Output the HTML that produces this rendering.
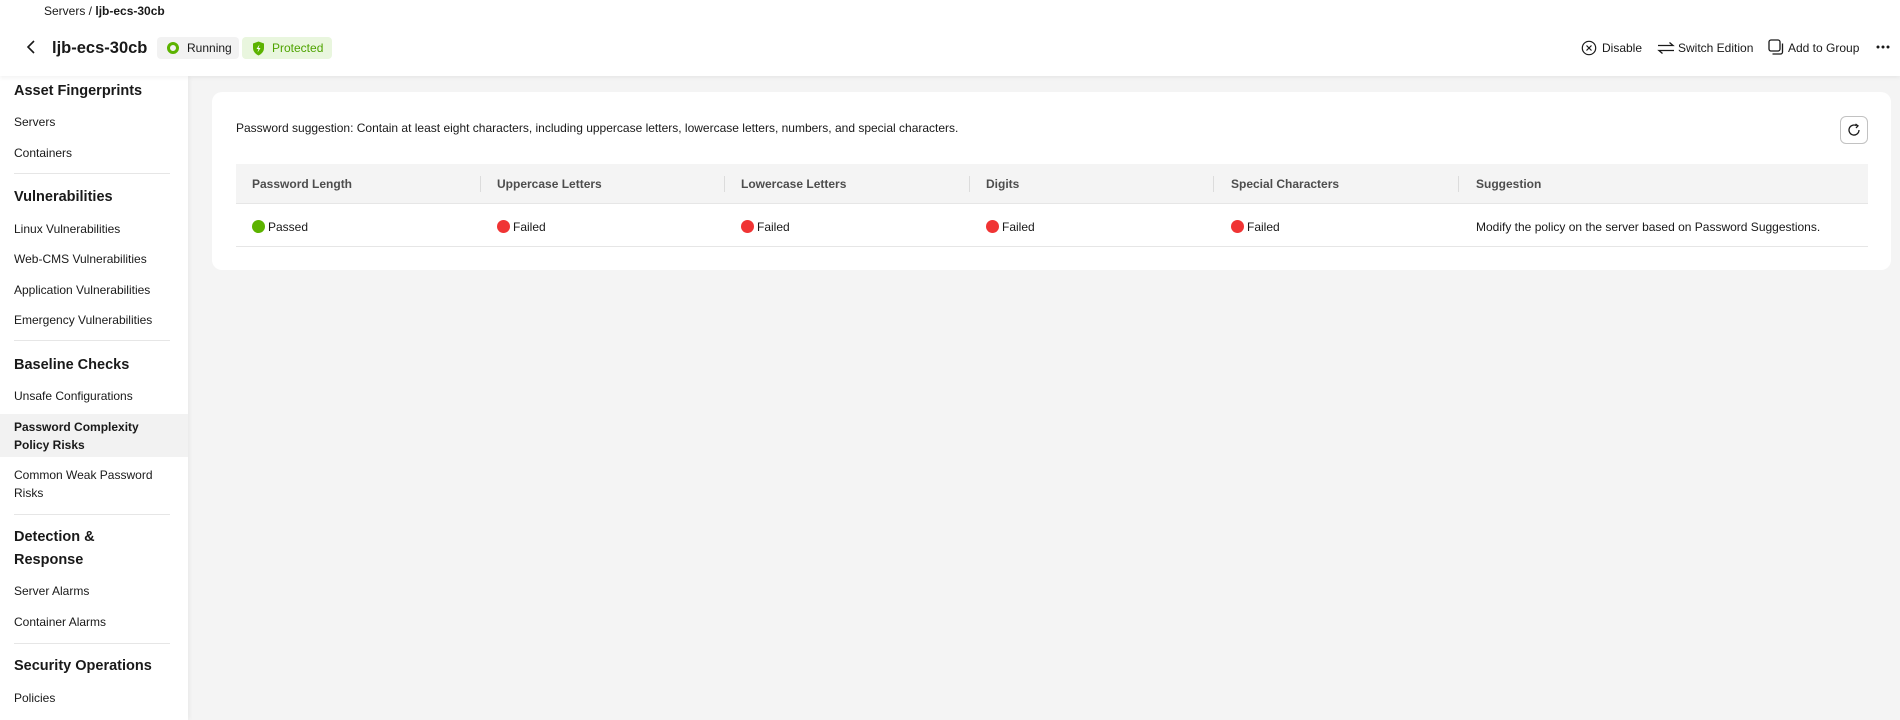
<!DOCTYPE html>
<html><head><meta charset="utf-8"><style>
*{margin:0;padding:0;box-sizing:border-box}
body{width:1900px;height:720px;overflow:hidden;font-family:"Liberation Sans",Arial,sans-serif;color:#191919;background:#f4f4f4;position:relative}
.hdr{position:absolute;left:0;top:0;width:1900px;height:76px;background:#fff;box-shadow:0 2px 4px rgba(0,0,0,.05);z-index:2}
.abs{position:absolute;white-space:nowrap}
.side{position:absolute;left:0;top:76px;width:188px;height:644px;background:#fff;box-shadow:2px 0 4px rgba(0,0,0,.04)}
.side .it{position:absolute;left:14px;font-size:12px;line-height:18px;transform:translateY(-9px)}
.side .h{position:absolute;left:14px;font-size:14.5px;font-weight:bold;line-height:22px;transform:translateY(-11px)}
.side .dv{position:absolute;left:14px;width:156px;height:1px;background:#e6e6e6}
.card{position:absolute;left:212px;top:92px;width:1679px;height:178px;background:#fff;border-radius:10px}
.th,.td{position:absolute;font-size:12px;white-space:nowrap}
.th{color:#4d4d4d;font-weight:bold;top:85px}
.td{top:128px}
.sep{position:absolute;top:84px;width:1px;height:16px;background:#dcdcdc}
.dot{display:inline-block;width:13px;height:13px;border-radius:50%;vertical-align:-2px;margin-right:3px}
.g{background:#5cb300}.r{background:#f03434}
.hb{font-size:12px;line-height:16px}
</style></head><body>
<div class="hdr">
 <div class="abs" style="left:44px;top:3px;font-size:12px;line-height:16px">Servers / <b>ljb-ecs-30cb</b></div>
 <svg class="abs" style="left:25px;top:39px" width="14" height="16" viewBox="0 0 14 16"><path d="M9 2 L3 8 L9 14" fill="none" stroke="#191919" stroke-width="1.6"/></svg>
 <div class="abs" style="left:52px;top:37px;font-size:16.5px;font-weight:bold;line-height:22px">ljb-ecs-30cb</div>
 <div class="abs hb" style="left:157px;top:37px;width:82px;height:22px;background:#f2f2f2;border-radius:4px;line-height:22px;padding-left:30px">Running</div>
 <div class="abs" style="left:167px;top:42px;width:12px;height:12px;border:3px solid #5cb300;border-radius:50%"></div>
 <div class="abs hb" style="left:242px;top:37px;width:90px;height:22px;background:#e9f6de;border-radius:4px;line-height:22px;padding-left:30px;color:#4ea300">Protected</div>
 <svg class="abs" style="left:252px;top:41px" width="13" height="15" viewBox="0 0 13 15"><path d="M6.5 0.5 L12 2.5 V7 C12 10.5 9.5 13 6.5 14.5 C3.5 13 1 10.5 1 7 V2.5 Z" fill="#5cb300"/><path d="M7.5 3.5 L4.5 8 H6.5 L5.5 11.5 L8.5 7 H6.5 Z" fill="#fff"/></svg>
 <svg class="abs" style="left:1581px;top:40px" width="16" height="16" viewBox="0 0 16 16"><circle cx="8" cy="8" r="6.7" fill="none" stroke="#191919" stroke-width="1.2"/><path d="M5.5 5.5 L10.5 10.5 M10.5 5.5 L5.5 10.5" stroke="#191919" stroke-width="1.2"/></svg>
 <div class="abs hb" style="left:1602px;top:40px">Disable</div>
 <svg class="abs" style="left:1657px;top:41px" width="18" height="14" viewBox="0 0 18 14"><path d="M1 4.5 H16 L12.5 1.5 M17 9.5 H2 L5.5 12.5" fill="none" stroke="#191919" stroke-width="1.3"/></svg>
 <div class="abs hb" style="left:1678px;top:40px">Switch Edition</div>
 <svg class="abs" style="left:1768px;top:39px" width="17" height="17" viewBox="0 0 17 17"><rect x="1" y="1" width="11" height="11" rx="2" fill="none" stroke="#191919" stroke-width="1.3"/><path d="M14.5 4.5 V13 A2 2 0 0 1 12.5 15 H4.5" fill="none" stroke="#191919" stroke-width="1.3"/></svg>
 <div class="abs hb" style="left:1788px;top:40px">Add to Group</div>
 <svg class="abs" style="left:1876px;top:45px" width="14" height="4" viewBox="0 0 14 4"><circle cx="2" cy="2" r="1.5" fill="#191919"/><circle cx="7" cy="2" r="1.5" fill="#191919"/><circle cx="12" cy="2" r="1.5" fill="#191919"/></svg>
</div>
<div class="side">
 <div class="h" style="top:15px">Asset Fingerprints</div>
 <div class="it" style="top:46px">Servers</div>
 <div class="it" style="top:77px">Containers</div>
 <div class="dv" style="top:97px"></div>
 <div class="h" style="top:121px">Vulnerabilities</div>
 <div class="it" style="top:153px">Linux Vulnerabilities</div>
 <div class="it" style="top:183px">Web-CMS Vulnerabilities</div>
 <div class="it" style="top:214px">Application Vulnerabilities</div>
 <div class="it" style="top:244px">Emergency Vulnerabilities</div>
 <div class="dv" style="top:264px"></div>
 <div class="h" style="top:289px">Baseline Checks</div>
 <div class="it" style="top:320px">Unsafe Configurations</div>
 <div style="position:absolute;left:0;top:338px;width:188px;height:43px;background:#f2f2f2"></div>
 <div class="it" style="top:351px;font-weight:bold">Password Complexity</div>
 <div class="it" style="top:369px;font-weight:bold">Policy Risks</div>
 <div class="it" style="top:399px">Common Weak Password</div>
 <div class="it" style="top:417px">Risks</div>
 <div class="dv" style="top:438px"></div>
 <div class="h" style="top:461px">Detection &amp;</div>
 <div class="h" style="top:484px">Response</div>
 <div class="it" style="top:515px">Server Alarms</div>
 <div class="it" style="top:546px">Container Alarms</div>
 <div class="dv" style="top:567px"></div>
 <div class="h" style="top:590px">Security Operations</div>
 <div class="it" style="top:622px">Policies</div>
</div>
<div class="card">
 <div class="abs" style="left:24px;top:28px;font-size:12px;line-height:16px">Password suggestion: Contain at least eight characters, including uppercase letters, lowercase letters, numbers, and special characters.</div>
 <div class="abs" style="left:1628px;top:24px;width:28px;height:28px;border:1px solid #c2c2c2;border-radius:6px"></div>
 <svg class="abs" style="left:1635px;top:31px" width="14" height="14" viewBox="0 0 14 14"><path d="M12 7 A5 5 0 1 1 9.5 2.7" fill="none" stroke="#191919" stroke-width="1.3"/><path d="M8.5 1 L11 2.8 L9 5" fill="none" stroke="#191919" stroke-width="1.3"/></svg>
 <div style="position:absolute;left:24px;top:72px;width:1632px;height:40px;background:#f4f4f4;border-bottom:1px solid #e6e6e6"></div>
 <div style="position:absolute;left:24px;top:154px;width:1632px;height:1px;background:#e6e6e6"></div>
 <div class="th" style="left:40px">Password Length</div>
 <div class="sep" style="left:268px"></div><div class="th" style="left:285px">Uppercase Letters</div>
 <div class="sep" style="left:512px"></div><div class="th" style="left:529px">Lowercase Letters</div>
 <div class="sep" style="left:757px"></div><div class="th" style="left:774px">Digits</div>
 <div class="sep" style="left:1001px"></div><div class="th" style="left:1019px">Special Characters</div>
 <div class="sep" style="left:1246px"></div><div class="th" style="left:1264px">Suggestion</div>
 <div class="td" style="left:40px"><span class="dot g"></span>Passed</div>
 <div class="td" style="left:285px"><span class="dot r"></span>Failed</div>
 <div class="td" style="left:529px"><span class="dot r"></span>Failed</div>
 <div class="td" style="left:774px"><span class="dot r"></span>Failed</div>
 <div class="td" style="left:1019px"><span class="dot r"></span>Failed</div>
 <div class="td" style="left:1264px">Modify the policy on the server based on Password Suggestions.</div>
</div>
</body></html>
